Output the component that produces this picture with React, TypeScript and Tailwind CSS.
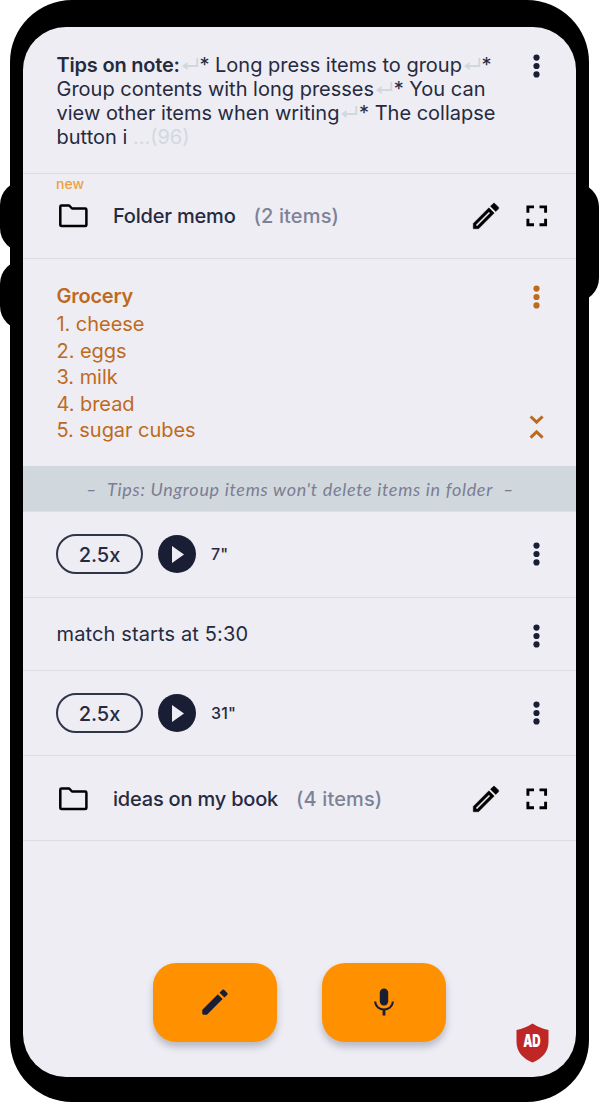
import type { ReactNode } from "react";

const Dots = ({ className = "" }: { className?: string }) => (
  <svg className={`h-6 w-6 shrink-0 ${className}`} viewBox="0 0 24 24" fill="currentColor">
    <circle cx="11.5" cy="3.6" r="3.1" />
    <circle cx="11.5" cy="12" r="3.1" />
    <circle cx="11.5" cy="20.4" r="3.1" />
  </svg>
);

const Return = () => (
  <svg className="ml-[2px] inline-block h-3 w-[17.6px] -translate-y-[2px] align-baseline text-[#d0d8dc]" viewBox="0 0 17.6 12" fill="none" stroke="currentColor">
    <path d="M15.3 0V8H3" strokeWidth="1.9" />
    <path d="M5.5 4L0 8L5.5 12Z" fill="currentColor" stroke="none" />
  </svg>
);

const Folder = () => (
  <svg className="h-[34px] w-[34px] shrink-0 text-black" viewBox="0 0 34 34" fill="none" stroke="currentColor" strokeWidth="2.5" strokeLinejoin="round">
    <path d="M4.5 6.5H12.2L15 9.5H28.2Q29.4 9.5 29.4 10.7V25.9Q29.4 27.1 28.2 27.1H4.5Q3.3 27.1 3.3 25.9V7.7Q3.3 6.5 4.5 6.5Z" />
  </svg>
);

const PencilOutline = () => (
  <svg className="h-[34px] w-[34px] shrink-0 text-black" viewBox="0 0 24 24" fill="currentColor" stroke="currentColor" strokeWidth="0.3">
    <path d="M14.06 9.02l.92.92L5.92 19H5v-.92l9.06-9.06M17.66 3c-.25 0-.51.1-.7.29l-1.83 1.83 3.75 3.75 1.83-1.83c.39-.39.39-1.02 0-1.41l-2.34-2.34c-.2-.2-.45-.29-.71-.29zm-3.6 3.19L3 17.25V21h3.75L17.81 9.94l-3.75-3.75z" />
  </svg>
);

const Expand = () => (
  <svg className="h-[22px] w-[22px] shrink-0 text-black" viewBox="0 0 22 22" fill="none" stroke="currentColor" strokeWidth="2.9">
    <path d="M1.9 7.8V1.9H8M13.5 1.9H19.6V7.8M19.6 13.8V19.7H13.5M8 19.7H1.9V13.8" />
  </svg>
);

const Row = ({ className, children }: { className: string; children: ReactNode }) => (
  <div className={`flex shrink-0 border-b border-[#dddce3] pl-[34px] ${className}`}>{children}</div>
);

const FolderRow = ({ name, count, isNew, className = "" }: { name: string; count: string; isNew?: boolean; className?: string }) => (
  <Row className={`relative h-[85px] items-center pr-[28px] ${className}`}>
    {isNew && (
      <span className="absolute top-[2px] left-[33px] text-[14px] leading-4 font-medium text-[#eba043]">new</span>
    )}
    <Folder />
    <span className="ml-[22px] text-[20px] font-medium tracking-[-0.2px] whitespace-nowrap">{name}</span>
    <span className="ml-[18px] flex-1 text-[20px] font-medium tracking-[0.13px] whitespace-nowrap text-[#7d8297]">{count}</span>
    <PencilOutline />
    <span className="ml-[23px]">
      <Expand />
    </span>
  </Row>
);

const AudioRow = ({ length, className }: { length: string; className: string }) => (
  <Row className={`items-center pr-[27px] ${className}`}>
    <button className="-ml-px flex h-10 w-[87px] items-center justify-center rounded-[20px] border-2 border-[#303549] pt-px text-[20px] font-medium">2.5x</button>
    <button className="ml-[15px] flex h-[38px] w-[38px] items-center justify-center rounded-full bg-[#191e34]">
      <svg className="ml-[2px] h-[17px] w-3" viewBox="0 0 12 17" fill="#eeedf4">
        <path d="M0 0L12 8.5L0 17Z" />
      </svg>
    </button>
    <span className="ml-[15px] flex-1 text-[16px] font-medium tracking-[0.2px]">{length}</span>
    <Dots className="text-[#191e34]" />
  </Row>
);

export default function App() {
  return (
    <div className="relative h-[1104px] w-[600px] overflow-hidden bg-white font-['Inter',sans-serif] text-[#262a40]">
      <div className="absolute top-[181px] left-0 h-[71px] w-12 rounded-[24px] bg-black" />
      <div className="absolute top-[260px] left-0 h-[70px] w-12 rounded-[24px] bg-black" />
      <div className="absolute top-[183px] right-px h-[119px] w-12 rounded-[24px] bg-black" />
      <div className="relative ml-[10px] h-[1102px] w-[579px] rounded-[62px] bg-black px-[13px] pt-[27px] pb-[25px]">
        <main className="relative flex h-full flex-col overflow-hidden rounded-[43px] bg-[#eeedf4]">
          <Row className="h-[147px] justify-between pt-[26px] pr-[27px]">
            <p className="-ml-[0.5px] text-[20px] leading-6 whitespace-nowrap">
              <span className="font-semibold tracking-[-0.2px]">Tips on note:</span><Return />* Long press items to group<Return />*<br />
              Group contents with long presses<Return />* You can<br />
              view other items when writing<Return />* The collapse<br />
              button i <span className="text-[#d2d9de]">...(96)</span>
            </p>
            <Dots className="mt-px text-[#191e34]" />
          </Row>
          <FolderRow name="Folder memo" count="(2 items)" isNew />
          <section className="flex h-[207px] shrink-0 justify-between pt-6 pr-[27px] pl-[33.5px] text-[#be6a1c]">
            <div className="text-[20px] tracking-[-0.05px]">
              <h2 className="text-[20px] leading-[26px] font-semibold tracking-[-0.25px]">Grocery</h2>
              <ol className="mt-[2px] leading-[26.6px]">
                <li>1. cheese</li>
                <li>2. eggs</li>
                <li>3. milk</li>
                <li>4. bread</li>
                <li>5. sugar cubes</li>
              </ol>
            </div>
            <div className="flex flex-col justify-between pt-[2px] pb-[27px]">
              <Dots />
              <svg className="h-6 w-6" viewBox="0 0 24 24" fill="none" stroke="currentColor" strokeWidth="3">
                <path d="M5.6 1.5L11.6 7.2L17.6 1.5M5.6 22.6L11.6 16.9L17.6 22.6" />
              </svg>
            </div>
          </section>
          <div className="flex h-[46px] shrink-0 items-center justify-center gap-[10px] border-b border-[#dbe0e5] bg-[#d0d8de] pt-[2px] pl-px font-['Lato',sans-serif] text-[18px] tracking-[0.68px] whitespace-nowrap text-[#7c7d93] italic">
            <span>–</span><span>Tips: Ungroup items won't delete items in folder</span><span>–</span>
          </div>
          <AudioRow length={'7"'} className="h-[86px] pb-px" />
          <Row className="h-[73px] items-center pr-[27px]">
            <span className="-ml-[0.5px] flex-1 text-[20px] tracking-[0.13px]">match starts at 5:30</span>
            <Dots className="mt-[3px] text-[#191e34]" />
          </Row>
          <AudioRow length={'31"'} className="h-[85px]" />
          <FolderRow name="ideas on my book" count="(4 items)" className="pt-px" />
          <div className="mt-[122px] ml-[129.5px] flex gap-[45px]">
            <button className="flex h-[79px] w-[124px] items-center justify-center rounded-[23px] bg-[#ff9100] text-[#191e34] shadow-[0_5px_7px_rgba(70,78,100,0.32)]">
              <svg className="-mt-px h-[34px] w-[34px]" viewBox="0 0 24 24" fill="currentColor">
                <path d="M3 18V20.2Q3 21 3.8 21H6.3L17.4 9.9L14 6.5L3.4 17.1Q3 17.5 3 18ZM20.7 6.9Q21.2 6.3 20.7 5.7L18.4 3.4Q17.8 2.9 17.2 3.4L15.2 5.4L18.7 8.9Z" />
              </svg>
            </button>
            <button className="flex h-[79px] w-[124px] items-center justify-center rounded-[23px] bg-[#ff9100] text-[#191e34] shadow-[0_5px_7px_rgba(70,78,100,0.32)]">
              <svg className="-mt-[2px] h-[28px] w-[20px]" viewBox="0 0 20 28" fill="none" stroke="currentColor" strokeWidth="2">
                <rect x="5.8" y="0.5" width="8.4" height="17" rx="4.2" fill="currentColor" stroke="none" />
                <path d="M1.2 13.5C1.5 24 18.5 24 18.8 13.5" />
                <path d="M10 21V27.5" strokeWidth="2.8" />
              </svg>
            </button>
          </div>
          <div className="absolute right-[27.5px] bottom-[14px] flex h-10 w-[33px] items-center justify-center">
            <svg className="absolute inset-0 h-10 w-[33px]" viewBox="0 0 33 40" fill="#bf2626">
              <path d="M16.5 0.5Q24 5.4 32.5 7V19C32.5 29 25.5 36 16.5 39.5C7.5 36 0.5 29 0.5 19V7Q9 5.4 16.5 0.5Z" />
            </svg>
            <span className="relative mt-[-2px] scale-x-[0.68] text-[17px] font-black text-white">AD</span>
          </div>
        </main>
      </div>
    </div>
  );
}
